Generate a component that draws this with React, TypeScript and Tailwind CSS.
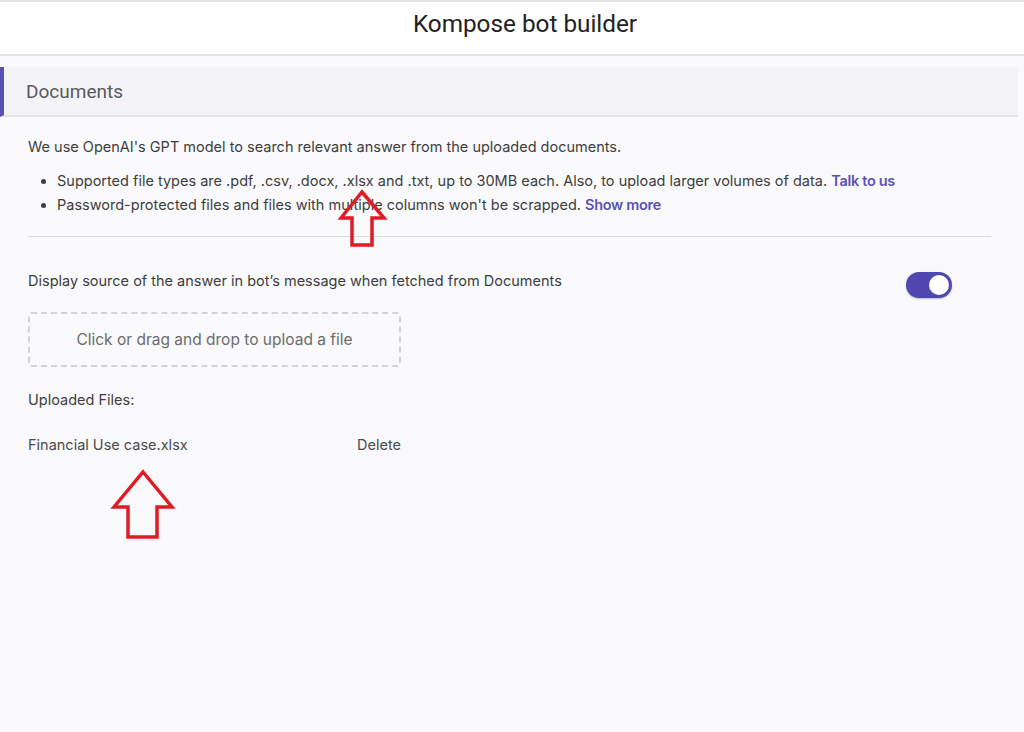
import React from "react";

function Arrow({ className, points, viewBox }: { className: string; points: string; viewBox: string }) {
  return (
    <svg className={className} viewBox={viewBox} fill="none">
      <polygon points={points} stroke="#e01b24" strokeWidth="3.5" strokeLinejoin="miter" fill="none" />
    </svg>
  );
}

export default function App() {
  return (
    <div className="relative min-h-[732px] w-[1024px] bg-[#fafafc] text-[#3d3d3d]" style={{ fontFamily: "Inter, 'Noto Sans', sans-serif" }}>
      <header className="flex h-[56px] items-center justify-center border-t-2 border-b-2 border-[#e3e3e6] bg-white pb-[8px] pl-[26px]">
        <h1 className="text-[24.3px] text-[#222]" style={{ fontFamily: "Roboto, sans-serif" }}>Kompose bot builder</h1>
      </header>
      <div className="mt-[11px] mr-[6px] flex h-[50px] items-center border-l-[4px] border-b-2 border-[#5b51b4] border-b-[#e4e4ea] bg-[#f3f3f8] pl-[22px] pt-[3px]">
        <span className="text-[19px] text-[#5a5a5a]" style={{ fontFamily: "Roboto, sans-serif" }}>Documents</span>
      </div>
      <div className="px-[28px] pt-[19px] text-[14.5px]">
        <p className="leading-[22px]">We use OpenAI's GPT model to search relevant answer from the uploaded documents.</p>
        <ul className="mt-[11px] list-disc pl-[29px] leading-[24px]">
          <li>Supported file types are .pdf, .csv, .docx, .xlsx and .txt, up to 30MB each. Also, to upload larger volumes of data. <span className="font-semibold tracking-[-0.3px] text-[#5b51b4]">Talk to us</span></li>
          <li>Password-protected files and files with multiple columns won't be scrapped. <span className="font-semibold tracking-[-0.3px] text-[#5b51b4]">Show more</span></li>
        </ul>
        <div className="mt-[19px] mr-[5px] h-px bg-[#d9d9e0]" />
        <div className="mt-[32px] flex items-start justify-between pr-[44px]">
          <span className="leading-[24px]">Display source of the answer in bot’s message when fetched from Documents</span>
          <div className="relative mt-[3px] h-[26px] w-[46px] rounded-full bg-[#5048b0] shadow-[0_1px_2px_rgba(0,0,0,0.25)]">
            <div className="absolute right-[3px] top-[3px] h-[20px] w-[20px] rounded-full bg-white" />
          </div>
        </div>
        <div className="mt-[14px] flex h-[55px] w-[373px] items-center justify-center rounded-[3px] border-2 border-dashed border-[#d2d2dc] text-[15.5px] text-[#6b6b6b]">
          Click or drag and drop to upload a file
        </div>
        <p className="mt-[22px] leading-[22px]">Uploaded Files:</p>
        <div className="mt-[23px] flex w-[373px] items-center justify-between leading-[22px] text-[#4a4a4a]">
          <span>Financial Use case.xlsx</span>
          <span>Delete</span>
        </div>
      </div>
      <Arrow className="absolute left-[338px] top-[188px] h-[60px] w-[50px]" viewBox="0 0 50 60" points="24,4 46,30 34,30 34,57 14,57 14,30 3,30" />
      <Arrow className="absolute left-[110px] top-[469px] h-[72px] w-[66px]" viewBox="0 0 66 72" points="33,3 62,38 47,38 47,68 18,68 18,38 4,38" />
    </div>
  );
}
